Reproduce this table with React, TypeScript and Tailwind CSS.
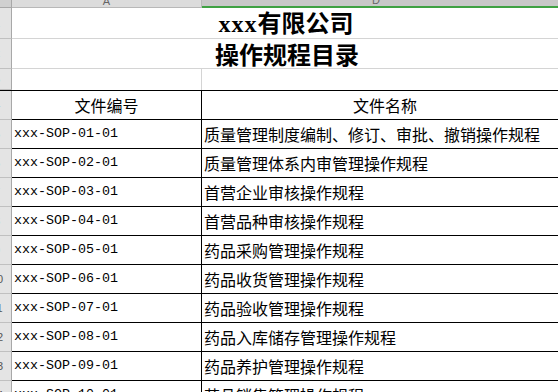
const docs = [
  { no: 5, code: 'xxx-SOP-01-01', name: '质量管理制度编制、修订、审批、撤销操作规程' },
  { no: 6, code: 'xxx-SOP-02-01', name: '质量管理体系内审管理操作规程' },
  { no: 7, code: 'xxx-SOP-03-01', name: '首营企业审核操作规程' },
  { no: 8, code: 'xxx-SOP-04-01', name: '首营品种审核操作规程' },
  { no: 9, code: 'xxx-SOP-05-01', name: '药品采购管理操作规程' },
  { no: 10, code: 'xxx-SOP-06-01', name: '药品收货管理操作规程' },
  { no: 11, code: 'xxx-SOP-07-01', name: '药品验收管理操作规程' },
  { no: 12, code: 'xxx-SOP-08-01', name: '药品入库储存管理操作规程' },
  { no: 13, code: 'xxx-SOP-09-01', name: '药品养护管理操作规程' },
  { no: 14, code: 'xxx-SOP-10-01', name: '药品销售管理操作规程' },
];

const cjk = { fontFamily: '"Noto Sans CJK SC", "Noto Sans", sans-serif' };
const mono = { fontFamily: '"Liberation Mono", "Noto Sans CJK SC", monospace' };
const title = { fontFamily: '"Liberation Serif", "Noto Sans CJK SC", serif' };

// row number cell: only the right edge of the real header column is on screen
const RowHead = ({ n }: { n: number }) => (
  <div className="w-[12px] shrink-0 h-full overflow-hidden bg-[#e4e4e4] border-r border-b border-r-[#a8a8a8] border-b-[#c0c0c0] flex items-center">
    <div className="w-[30px] shrink-0 -ml-[18px] text-center text-[11px] text-[#555]" style={{ fontFamily: '"Liberation Sans", sans-serif' }}>
      {n}
    </div>
  </div>
);

export default function App() {
  return (
    <div className="w-[558px] h-[392px] overflow-hidden bg-white text-black">
      {/* Column header bar */}
      <div className="flex h-[8px] w-[580px] bg-[#dcdcdc] text-[11px] text-[#666]" style={{ fontFamily: '"Liberation Sans", sans-serif' }}>
        <div className="w-[12px] shrink-0 bg-[#d0d0d0] border-r border-b border-[#a8a8a8]" />
        <div className="w-[190px] shrink-0 overflow-hidden flex justify-center items-end leading-[12px] border-r border-b border-[#b8b8b8]">A</div>
        <div className="flex-1 overflow-hidden flex justify-center items-end leading-[12px] bg-[#c8c8c8] border-b-2 border-[#3fa143]">
          <span className="-ml-[30px]">D</span>
        </div>
      </div>

      {/* Title rows */}
      <div className="flex h-[31px] w-[580px]">
        <RowHead n={1} />
        <div className="flex-1 flex items-center justify-center border-b border-[#d4d4d4] text-[24px] font-bold leading-none pt-[1px] pr-[20px]" style={title}>
          <span className="tracking-[1px]">xxx</span>有限公司
        </div>
      </div>
      <div className="flex h-[30px] w-[580px]">
        <RowHead n={2} />
        <div className="flex-1 flex items-center justify-center border-b border-[#d4d4d4] text-[24px] font-bold leading-none pr-[18px]" style={cjk}>
          操作规程目录
        </div>
      </div>
      <div className="flex h-[21px] w-[580px]">
        <RowHead n={3} />
        <div className="w-[190px] shrink-0 border-r border-[#d4d4d4]" />
        <div className="flex-1" />
      </div>

      {/* Table */}
      <div className="w-[580px] border-t border-black">
        <div className="flex h-[29px]">
          <RowHead n={4} />
          <div className="w-[190px] shrink-0 flex items-center justify-center border-r border-b border-black text-[16px]" style={cjk}>
            文件编号
          </div>
          <div className="flex-1 flex items-center justify-center border-b border-black text-[16px] pr-[12px]" style={cjk}>
            文件名称
          </div>
        </div>
        {docs.map((d) => (
          <div key={d.code} className="flex h-[29px]">
            <RowHead n={d.no} />
            <div className="w-[190px] shrink-0 flex items-center pl-[2px] border-r border-b border-black text-[13.33px]" style={mono}>
              {d.code}
            </div>
            <div className="flex-1 flex items-center pl-[2px] border-b border-black text-[16px] whitespace-nowrap" style={cjk}>
              {d.name}
            </div>
          </div>
        ))}
      </div>
    </div>
  );
}
